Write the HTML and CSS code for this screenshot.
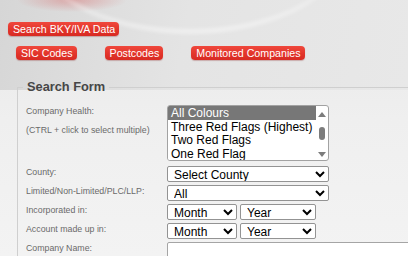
FILE: index.html
```html
<!DOCTYPE html>
<html lang="en">
<head>
  <meta charset="UTF-8">
  <title>Search BKY/IVA Data</title>
  <link rel="stylesheet" href="styles.css">
</head>
<body>
  <div class="nav">
    <a href="#" class="red-btn">Search BKY/IVA Data</a>
    <div class="sub-nav">
      <a href="#" class="red-btn">SIC Codes</a>
      <a href="#" class="red-btn">Postcodes</a>
      <a href="#" class="red-btn">Monitored Companies</a>
    </div>
  </div>

  <form>
    <fieldset class="search-form">
      <legend>Search Form</legend>
      <div class="form-grid">
        <div class="label">
          Company Health:
          <span class="hint">(CTRL + click to select multiple)</span>
        </div>
        <div class="field health-field">
          <div class="listbox">
            <select class="health" multiple size="4">
              <option selected>All Colours</option>
              <option>Three Red Flags (Highest)</option>
              <option>Two Red Flags</option>
              <option>One Red Flag</option>
              <option>Amber</option>
              <option>Light Green</option>
              <option>Green</option>
              <option>Dark Green</option>
              <option>Blue</option>
              <option>Dark Blue</option>
              <option>Purple (Lowest)</option>
              <option>Unknown</option>
            </select>
            <div class="scrollbar">
              <span class="arrow up"></span>
              <span class="thumb"></span>
              <span class="arrow down"></span>
            </div>
          </div>
        </div>

        <div class="label">County:</div>
        <div class="field">
          <select class="wide"><option>Select County</option></select>
        </div>

        <div class="label">Limited/Non-Limited/PLC/LLP:</div>
        <div class="field">
          <select class="wide"><option>All</option></select>
        </div>

        <div class="label">Incorporated in:</div>
        <div class="field">
          <select class="month"><option>Month</option></select>
          <select class="year"><option>Year</option></select>
        </div>

        <div class="label">Account made up in:</div>
        <div class="field">
          <select class="month"><option>Month</option></select>
          <select class="year"><option>Year</option></select>
        </div>

        <div class="label">Company Name:</div>
        <div class="field">
          <input type="text" class="name-input">
        </div>
      </div>
    </fieldset>
  </form>
</body>
</html>
```

FILE: styles.css
```css
html, body {
  margin: 0;
  padding: 0;
  height: 100%;
  overflow: hidden;
}
body {
  position: relative;
  font-family: "Liberation Sans", Arial, sans-serif;
  background:
    radial-gradient(ellipse 55px 12px at 72px 0, rgba(214, 70, 70, 0.35), rgba(214, 70, 70, 0) 100%),
    linear-gradient(100deg, #d6d6d6 0, #e4e4e4 45%, #e8e8e8 100%) top / 100% 90px no-repeat,
    linear-gradient(to bottom, #e8e8e8 0, #efefef 120px, #f3f3f3 256px);
}
/* faint white swoosh in the header background */
body::before {
  content: "";
  position: absolute;
  left: 30px;
  top: -150px;
  width: 320px;
  height: 180px;
  border-radius: 50%;
  border-bottom: 3px solid rgba(255, 255, 255, 0.7);
  filter: blur(2px);
  z-index: -1;
}
.nav {
  display: flex;
  flex-direction: column;
  align-items: flex-start;
  padding: 22px 0 0 8px;
}
.sub-nav {
  display: flex;
  gap: 28px;
  margin: 10px 0 0 8px;
}
.red-btn {
  display: block;
  font-size: 10.67px;
  line-height: 14px;
  padding: 0 4px 0 5px;
  color: #fff;
  text-decoration: none;
  border-radius: 4px;
  background: linear-gradient(to bottom, #f0483c, #e2352b 55%, #d82a22);
  box-shadow: 0 1px 1px rgba(120, 0, 0, 0.25);
}

.search-form {
  margin: 19px 0 0 17px;
  padding: 10px 0 0 8px;
  width: 600px;
  border: 1px solid #cfcfcf;
  border-right: none;
  border-bottom: none;
}
.search-form legend {
  margin-left: -3px;
  padding: 0 4px;
  font-size: 12.8px;
  line-height: 16px;
  font-weight: bold;
  color: #464646;
}
.form-grid {
  display: grid;
  grid-template-columns: 141px 1fr;
  row-gap: 3px;
}
.label {
  font-size: 8.8px;
  line-height: 11px;
  color: #6a6a6a;
  padding-top: 1px;
}
.hint {
  display: block;
  margin-top: 8px;
}
.health-field {
  margin-bottom: 2px;
}
.field {
  display: flex;
  gap: 3px;
}
select {
  font-family: "Liberation Sans", Arial, sans-serif;
  font-size: 12px;
  height: 16px;
  margin: 0;
  padding: 0 2px;
  color: #000;
  background: #fff;
  border: 1px solid #939393;
  border-radius: 2px;
}
.listbox {
  display: flex;
  width: 162px;
  height: 56px;
  box-sizing: border-box;
  border: 1px solid #a2a2a2;
  border-radius: 3px;
  background: #fff;
  overflow: hidden;
}
select.health {
  flex: 1;
  height: 54px;
  padding: 0;
  border: none;
  border-radius: 0;
  overflow: hidden;
  outline: none;
}
select.health option {
  box-sizing: border-box;
  height: 13.5px;
  min-height: 0;
  padding: 0 3px;
  line-height: 13.5px;
}
select.health option:checked {
  background: #777 linear-gradient(#777, #777);
  color: #fff;
}
.scrollbar {
  width: 12px;
  display: flex;
  flex-direction: column;
  align-items: center;
  padding-top: 6px;
}
.arrow {
  width: 0;
  height: 0;
  border-left: 4px solid transparent;
  border-right: 4px solid transparent;
}
.arrow.up {
  border-bottom: 5px solid #7c7c7c;
}
.arrow.down {
  border-top: 5px solid #7c7c7c;
  margin-top: 12px;
}
.thumb {
  width: 6px;
  height: 13px;
  margin-top: 10px;
  border-radius: 3px;
  background: #7c7c7c;
}
select.wide {
  width: 162px;
}
select.month {
  width: 70px;
}
select.year {
  width: 76px;
}
.name-input {
  width: 300px;
  height: 22px;
  margin: 0;
  padding: 0 3px;
  border: 1px solid #a5a5a5;
  border-radius: 2px;
  background: #fff;
}
```
